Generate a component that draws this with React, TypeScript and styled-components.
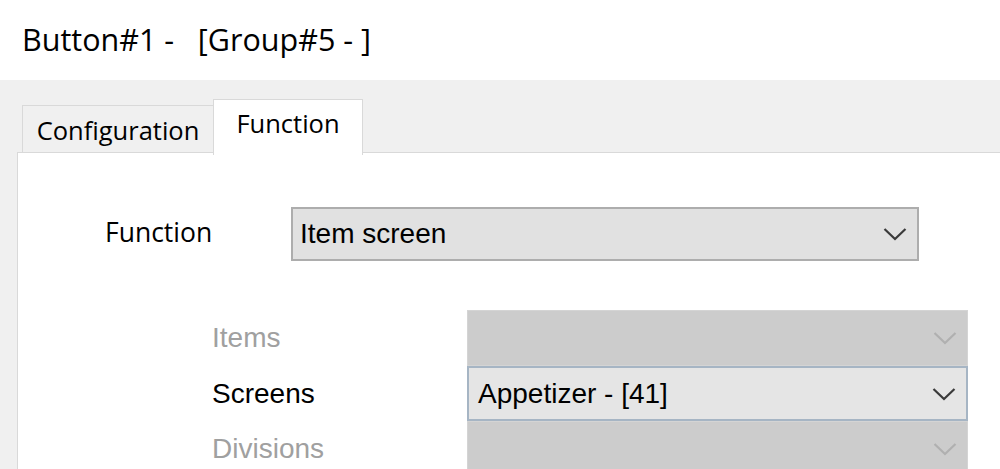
import React from "react";
import styled, { createGlobalStyle } from "styled-components";

const Global = createGlobalStyle`
  html, body { margin: 0; padding: 0; background: #ffffff; }
  body { width: 1000px; height: 469px; overflow: hidden; }
  #root { height: 100%; }
`;

const Window = styled.div`
  display: flex;
  flex-direction: column;
  width: 1000px;
  height: 469px;
  overflow: hidden;
`;

const Header = styled.div`
  height: 80px;
  flex: none;
  display: flex;
  align-items: center;
  padding-left: 22px;
  padding-bottom: 2px;
  box-sizing: border-box;
  background: #ffffff;
  font-family: "Open Sans", "Noto Sans", sans-serif;
  font-size: 30.5px;
  color: #000;
  white-space: pre;
`;

const Body = styled.div`
  flex: 1;
  background: #f0f0f0;
  padding: 19px 0 0 17px;
  display: flex;
  flex-direction: column;
  min-height: 0;
`;

const TabStrip = styled.div`
  display: flex;
  align-items: flex-start;
  padding-left: 5px;
  height: 53px;
  flex: none;
  position: relative;
  z-index: 1;
`;

const Tab = styled.div<{ $active?: boolean }>`
  box-sizing: border-box;
  border: 1px solid #d9d9d9;
  border-bottom: none;
  font-family: "Open Sans", "Noto Sans", sans-serif;
  font-size: 25.5px;
  color: #000;
  display: flex;
  justify-content: center;
  background: ${(p) => (p.$active ? "#ffffff" : "#f0f0f0")};
  width: ${(p) => (p.$active ? "150px" : "192px")};
  height: ${(p) => (p.$active ? "56px" : "47px")};
  margin-top: ${(p) => (p.$active ? "0" : "6px")};
  padding-top: ${(p) => (p.$active ? "6px" : "7px")};
  ${(p) => (p.$active ? "margin-left: -1px;" : "")}
`;

const Panel = styled.div`
  flex: 1;
  background: #ffffff;
  border: 1px solid #d9d9d9;
  border-right: none;
  border-bottom: none;
  margin-right: -10px;
  padding: 54px 0 0 0;
  display: flex;
  flex-direction: column;
`;

const FunctionRow = styled.div`
  display: flex;
  align-items: center;
  padding-left: 87px;
`;

const MainLabel = styled.div`
  width: 186px;
  font-family: "Open Sans", "Noto Sans", sans-serif;
  font-size: 26.5px;
  color: #000;
  padding-bottom: 4px;
`;

type SelectVariant = "normal" | "disabled" | "focused";

const SelectBox = styled.div<{ $variant: SelectVariant; $width: number; $height: number }>`
  box-sizing: border-box;
  width: ${(p) => p.$width}px;
  height: ${(p) => p.$height}px;
  display: flex;
  align-items: center;
  justify-content: space-between;
  padding: 0 8px 0 ${(p) => (p.$variant === "focused" ? 9 : 7)}px;
  font-family: "Liberation Sans", Arial, sans-serif;
  font-size: 28px;
  color: #000;
  background: ${(p) =>
    p.$variant === "disabled" ? "#cccccc" : p.$variant === "focused" ? "#e5e5e5" : "#e1e1e1"};
  border: ${(p) =>
    p.$variant === "disabled"
      ? "1px solid #d4d4d4"
      : p.$variant === "focused"
      ? "2px solid #a6b5c4"
      : "2px solid #adadad"};
`;

const Chevron = styled.svg<{ $muted?: boolean }>`
  width: 24px;
  height: 14px;
  flex: none;
  margin-right: 2px;
  stroke: ${(p) => (p.$muted ? "#b0b0b0" : "#3a3a3a")};
  fill: none;
  stroke-width: 2.2;
`;

const SubGrid = styled.div`
  display: grid;
  grid-template-columns: 255px 501px;
  grid-template-rows: 56px 55px 56px;
  margin-top: 49px;
  padding-left: 194px;
  align-items: center;
`;

const SubLabel = styled.div<{ $disabled?: boolean }>`
  font-family: "Liberation Sans", Arial, sans-serif;
  font-size: 28px;
  color: ${(p) => (p.$disabled ? "#a0a0a0" : "#000")};
`;

const SelectText = styled.span`
  white-space: pre;
`;

function Arrow({ muted }: { muted?: boolean }) {
  return (
    <Chevron $muted={muted} viewBox="0 0 24 14">
      <polyline points="1.5,2 12,12 22.5,2" />
    </Chevron>
  );
}

function Select({
  value,
  variant,
  width,
  height,
}: {
  value?: string;
  variant: SelectVariant;
  width: number;
  height: number;
}) {
  return (
    <SelectBox $variant={variant} $width={width} $height={height}>
      <SelectText>{value ?? ""}</SelectText>
      <Arrow muted={variant === "disabled"} />
    </SelectBox>
  );
}

export default function App() {
  return (
    <>
      <Global />
      <Window>
        <Header>{"Button#1 -   [Group#5 - ]"}</Header>
        <Body>
          <TabStrip>
            <Tab>Configuration</Tab>
            <Tab $active>Function</Tab>
          </TabStrip>
          <Panel>
            <FunctionRow>
              <MainLabel>Function</MainLabel>
              <Select value="Item screen" variant="normal" width={628} height={54} />
            </FunctionRow>
            <SubGrid>
              <SubLabel $disabled>Items</SubLabel>
              <Select variant="disabled" width={501} height={56} />
              <SubLabel>Screens</SubLabel>
              <Select value="Appetizer - [41]" variant="focused" width={501} height={55} />
              <SubLabel $disabled>Divisions</SubLabel>
              <Select variant="disabled" width={501} height={56} />
            </SubGrid>
          </Panel>
        </Body>
      </Window>
    </>
  );
}
